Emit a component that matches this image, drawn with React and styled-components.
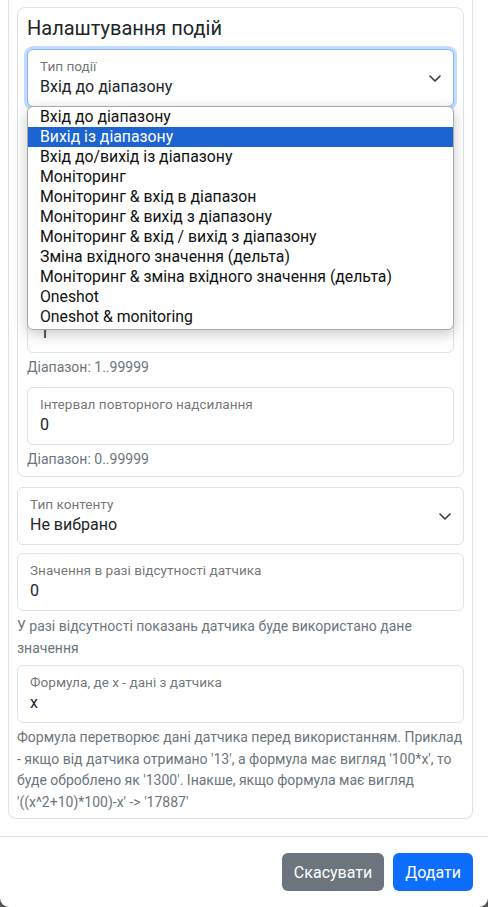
import React from 'react';
import styled, { createGlobalStyle, css } from 'styled-components';

const GlobalStyle = createGlobalStyle`
  html, body {
    margin: 0;
    padding: 0;
    background: #555;
    font-family: Roboto, 'Noto Sans', sans-serif;
    color: #212529;
  }

  *, *:before, *:after {
    box-sizing: border-box;
  }
`;

const Modal = styled.div`
  display: flex;
  flex-direction: column;
  height: 100vh;
  background: #fff;
  border-radius: 0 0 9px 9px;
  overflow: hidden;
`;

const Body = styled.div`
  flex: 1;
  min-height: 0;
  overflow: hidden;
  padding: 0 15px 0 8px;
`;

const Section = styled.div`
  border: 1px solid #dee2e6;
  border-top: 0;
  border-radius: 0 0 8px 8px;
  padding: 7px 8px 5px;
`;

const Card = styled.div`
  border: 1px solid #dee2e6;
  border-radius: 8px;
  padding: 8px 9px 6px;
  margin-bottom: 10px;
`;

const Title = styled.h5`
  margin: 0 0 9px;
  font-size: 20px;
  line-height: 24px;
  font-weight: 400;
  color: #212529;
`;

const Field = styled.div`
  position: relative;
  display: flex;
  align-items: center;
  height: 58px;
  margin-top: ${p => p.$mt || 0}px;
  padding: 8px 12px 7px;
  background: #fff;
  border: 1px solid #dee2e6;
  border-radius: 6px;

  ${p => p.$focused && css`
    border-color: #86b7fe;
    box-shadow: 0 0 0 3px rgba(13, 110, 253, 0.25);
  `}
`;

const FieldText = styled.div`
  flex: 1;
  display: flex;
  flex-direction: column;
  align-self: stretch;
`;

const Label = styled.div`
  min-height: 17px;
  font-size: 13.6px;
  line-height: 17px;
  color: rgba(33, 37, 41, 0.65);
  white-space: nowrap;
`;

const Value = styled.div`
  font-size: 16px;
  line-height: 24px;
  color: #212529;
  white-space: nowrap;
`;

const Chevron = styled.svg`
  flex: none;
  width: 12px;
  height: 7px;
  margin-left: 12px;
`;

const Help = styled.div`
  min-height: 21.5px;
  margin-top: ${p => p.$mt || 4}px;
  font-size: 14px;
  line-height: 21.5px;
  color: #6c757d;
`;

const HelpLine = styled.div`
  white-space: nowrap;
`;

const Dropdown = styled.ul`
  position: absolute;
  top: 100%;
  left: -1px;
  right: -1px;
  z-index: 10;
  margin: 0;
  padding: 0 0 2px;
  list-style: none;
  background: #fff;
  border: 1px solid #a8a8a8;
  border-radius: 6px;
  box-shadow: 0 4px 14px rgba(0, 0, 0, 0.22);
  overflow: hidden;
`;

const Option = styled.li`
  height: 20px;
  padding-left: 12px;
  font-size: 15.8px;
  line-height: 20px;
  white-space: nowrap;
  color: ${p => (p.$active ? '#fff' : '#111')};
  background: ${p => (p.$active ? '#1c64d2' : 'transparent')};
`;

const Footer = styled.div`
  display: flex;
  justify-content: flex-end;
  gap: 9px;
  padding: 16px 15px 16px;
  border-top: 1px solid #dee2e6;
`;

const Button = styled.button`
  height: 38px;
  padding: 0 12px;
  border: 0;
  border-radius: 6px;
  font-family: inherit;
  font-size: 16px;
  color: #fff;
  background: ${p => (p.$primary ? '#0d6efd' : '#6c757d')};
`;

const eventTypes = [
  'Вхід до діапазону',
  'Вихід із діапазону',
  'Вхід до/вихід із діапазону',
  'Моніторинг',
  'Моніторинг & вхід в діапазон',
  'Моніторинг & вихід з діапазону',
  'Моніторинг & вхід / вихід з діапазону',
  'Зміна вхідного значення (дельта)',
  'Моніторинг & зміна вхідного значення (дельта)',
  'Oneshot',
  'Oneshot & monitoring',
];

const ChevronIcon = () => (
  <Chevron viewBox="0 0 12 7" fill="none">
    <path d="M1 1l5 5 5-5" stroke="#343a40" strokeWidth="1.6" strokeLinecap="round" strokeLinejoin="round" />
  </Chevron>
);

const TextField = ({ label, value, mt, focused, select, children }) => (
  <Field $mt={mt} $focused={focused}>
    <FieldText>
      <Label>{label}</Label>
      <Value>{value}</Value>
    </FieldText>
    {select && <ChevronIcon />}
    {children}
  </Field>
);

const App = () => {
  return (
    <>
      <GlobalStyle />
      <Modal>
        <Body>
          <Section>
            <Card>
              <Title>Налаштування подій</Title>
              <TextField label="Тип події" value="Вхід до діапазону" focused select>
                <Dropdown>
                  {eventTypes.map((item, index) => (
                    <Option key={item} $active={index === 1}>{item}</Option>
                  ))}
                </Dropdown>
              </TextField>
              {/* fields hidden under the open list */}
              <TextField mt={5} />
              <Help />
              <TextField mt={8} />
              <Help />
              <TextField value="1" mt={8} />
              <Help>Діапазон: 1..99999</Help>
              <TextField label="Інтервал повторного надсилання" value="0" mt={8} />
              <Help>Діапазон: 0..99999</Help>
            </Card>
            <TextField label="Тип контенту" value="Не вибрано" select />
            <TextField label="Значення в разі відсутності датчика" value="0" mt={8} />
            <Help $mt={5}>
              У разі відсутності показань датчика буде використано дане значення
            </Help>
            <TextField label="Формула, де x - дані з датчика" value="x" mt={6} />
            <Help>
              <HelpLine>Формула перетворює дані датчика перед використанням. Приклад</HelpLine>
              <HelpLine>- якщо від датчика отримано '13', а формула має вигляд '100*x', то</HelpLine>
              <HelpLine>буде оброблено як '1300'. Інакше, якщо формула має вигляд</HelpLine>
              <HelpLine>'((x^2+10)*100)-x' -&gt; '17887'</HelpLine>
            </Help>
          </Section>
        </Body>
        <Footer>
          <Button>Скасувати</Button>
          <Button $primary>Додати</Button>
        </Footer>
      </Modal>
    </>
  );
};

export default App;
